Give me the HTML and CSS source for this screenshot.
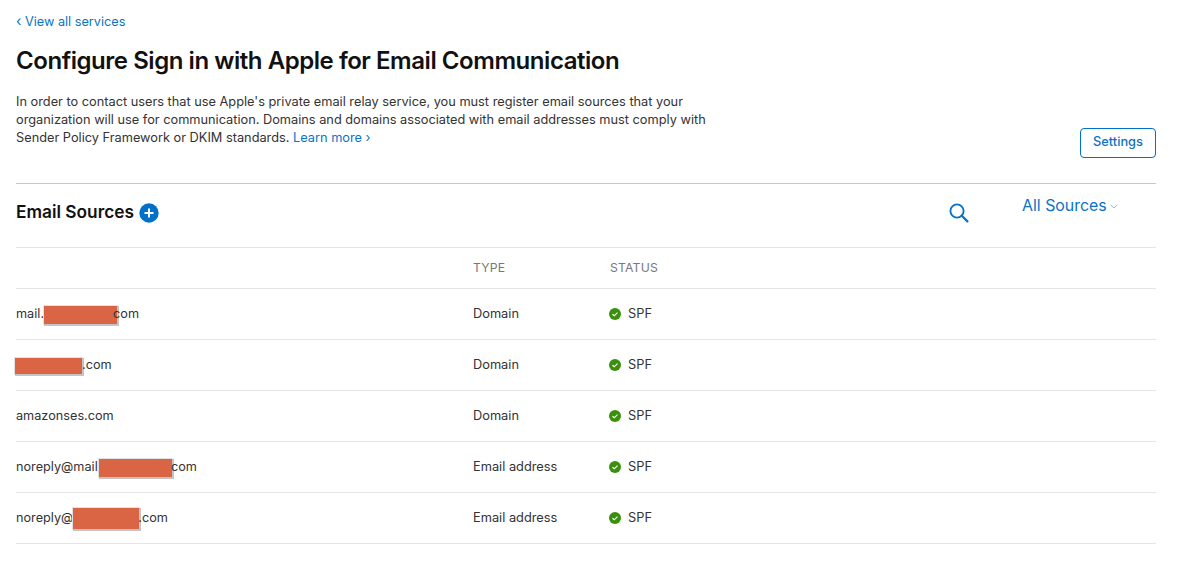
FILE: index.html
```html
<!DOCTYPE html>
<html lang="en">
<head>
<meta charset="utf-8">
<title>Configure Sign in with Apple for Email Communication</title>
<link rel="stylesheet" href="styles.css">
</head>
<body>
<main class="page">
  <a class="back" href="#"><span class="back-chev">‹</span> View all services</a>
  <h1 class="title">Configure Sign in with Apple for Email Communication</h1>
  <div class="intro">
    <p class="intro-text">In order to contact users that use Apple's private email relay service, you must register email sources that your organization will use for communication. Domains and domains associated with email addresses must comply with Sender Policy Framework or DKIM standards. <a class="link" href="#">Learn more ›</a></p>
    <button class="settings" type="button">Settings</button>
  </div>
  <section class="toolbar">
    <div class="toolbar-left">
      <h2 class="section-title">Email Sources</h2>
      <svg class="add" width="20" height="20" viewBox="0 0 20 20" aria-hidden="true"><circle cx="10" cy="10" r="9.7" fill="#0070c9"/><path d="M10 5.5v9M5.5 10h9" stroke="#fff" stroke-width="2" fill="none"/></svg>
    </div>
    <svg class="search" width="22" height="22" viewBox="0 0 22 22" aria-hidden="true"><circle cx="9" cy="9" r="6.6" fill="none" stroke="#0b73c6" stroke-width="1.9"/><path d="M13.8 13.8l5.6 5.6" stroke="#0b73c6" stroke-width="2.3" fill="none" stroke-linecap="round"/></svg>
    <div class="filter">All Sources<svg class="caret" width="8" height="5" viewBox="0 0 8 5" aria-hidden="true"><path d="M.7.9L4 4l3.3-3.1" fill="none" stroke="#8fb9dc" stroke-width="1"/></svg></div>
  </section>
  <div class="table">
    <div class="row head"><span></span><span>TYPE</span><span>STATUS</span></div>
    <div class="row"><span class="name">mail.<i class="redact r1"></i>com</span><span>Domain</span><span class="status"><svg class="ok" width="12" height="12" viewBox="0 0 12 12" aria-hidden="true"><circle cx="6" cy="6" r="6" fill="#3a8f0b"/><path d="M3.5 6.2L5.3 7.8 8.5 4.6" fill="none" stroke="#fff" stroke-width="1.2"/></svg>SPF</span></div>
    <div class="row"><span class="name"><i class="redact r2"></i>.com</span><span>Domain</span><span class="status"><svg class="ok" width="12" height="12" viewBox="0 0 12 12" aria-hidden="true"><circle cx="6" cy="6" r="6" fill="#3a8f0b"/><path d="M3.5 6.2L5.3 7.8 8.5 4.6" fill="none" stroke="#fff" stroke-width="1.2"/></svg>SPF</span></div>
    <div class="row"><span class="name">amazonses.com</span><span>Domain</span><span class="status"><svg class="ok" width="12" height="12" viewBox="0 0 12 12" aria-hidden="true"><circle cx="6" cy="6" r="6" fill="#3a8f0b"/><path d="M3.5 6.2L5.3 7.8 8.5 4.6" fill="none" stroke="#fff" stroke-width="1.2"/></svg>SPF</span></div>
    <div class="row"><span class="name">noreply@mail.<i class="redact r4"></i>com</span><span>Email address</span><span class="status"><svg class="ok" width="12" height="12" viewBox="0 0 12 12" aria-hidden="true"><circle cx="6" cy="6" r="6" fill="#3a8f0b"/><path d="M3.5 6.2L5.3 7.8 8.5 4.6" fill="none" stroke="#fff" stroke-width="1.2"/></svg>SPF</span></div>
    <div class="row"><span class="name">noreply@<i class="redact r5"></i>.com</span><span>Email address</span><span class="status"><svg class="ok" width="12" height="12" viewBox="0 0 12 12" aria-hidden="true"><circle cx="6" cy="6" r="6" fill="#3a8f0b"/><path d="M3.5 6.2L5.3 7.8 8.5 4.6" fill="none" stroke="#fff" stroke-width="1.2"/></svg>SPF</span></div>
  </div>
</main>
</body>
</html>
```
FILE: styles.css
```css
* { box-sizing: border-box; }
html, body { margin: 0; background: #fff; }
body { font-family: Inter, "Liberation Sans", sans-serif; color: #333; font-size: 12.8px; }
a { text-decoration: none; }
.page { padding: 13px 29px 0 16px; }
.back { display: block; color: #0b73c6; font-size: 12.7px; line-height: 16px; }
.back-chev { font-size: 14px; }
.title { margin: 15px 0 0; font-size: 24px; line-height: 31px; font-weight: 600; color: #111; letter-spacing: -0.45px; }
.intro { display: flex; justify-content: space-between; align-items: flex-end; margin-top: 17px; padding-bottom: 25px; border-bottom: 1px solid #c8c8c8; }
.intro-text { margin: 0; width: 700px; padding-bottom: 11px; line-height: 18px; font-size: 12.78px; }
.link { color: #0b73c6; }
.settings { width: 76px; height: 30px; padding: 0 0 3px; border: 1px solid #0070c9; border-radius: 4px; background: #fff; color: #0b73c6; font: 500 12.8px Inter, sans-serif; }
.toolbar { display: flex; align-items: flex-start; height: 64px; border-bottom: 1px solid #e5e5e5; }
.toolbar-left { display: flex; align-items: center; gap: 5px; flex: 1; margin-top: 17px; }
.section-title { margin: 0; font-size: 17.3px; line-height: 22px; font-weight: 600; color: #111; }
.add { display: block; margin-top: 2px; }
.search { margin-top: 18px; margin-right: 52px; }
.filter { width: 134px; margin-top: 12px; color: #0b73c6; font-size: 15.9px; line-height: 20px; }
.caret { margin-left: 3px; vertical-align: 2px; }
.row { display: grid; grid-template-columns: 457px 137px 1fr; align-items: center; height: 51px; border-bottom: 1px solid #e5e5e5; line-height: 16px; }
.row.head { height: 41px; color: #777; font-size: 12.2px; letter-spacing: 0.2px; }
.name { font-size: 12.7px; }
.status { display: flex; align-items: center; gap: 7px; margin-left: -1px; }
.redact { display: inline-block; vertical-align: middle; margin-top: -12px; margin-bottom: -12px; background: #d96544; box-shadow: 1px 1px 0 1px #c4c4c4, 0 0 0 1px #e2e2e2; }
.r1 { width: 73px; height: 18px; margin-left: -0.5px; margin-right: -3.5px; }
.r2 { width: 67px; height: 16px; margin-left: -1px; margin-right: 0; }
.r4 { width: 73px; height: 18px; margin-left: -2.5px; margin-right: -1px; }
.r5 { width: 66px; height: 21px; margin-left: 0; margin-right: -1px; }
```
